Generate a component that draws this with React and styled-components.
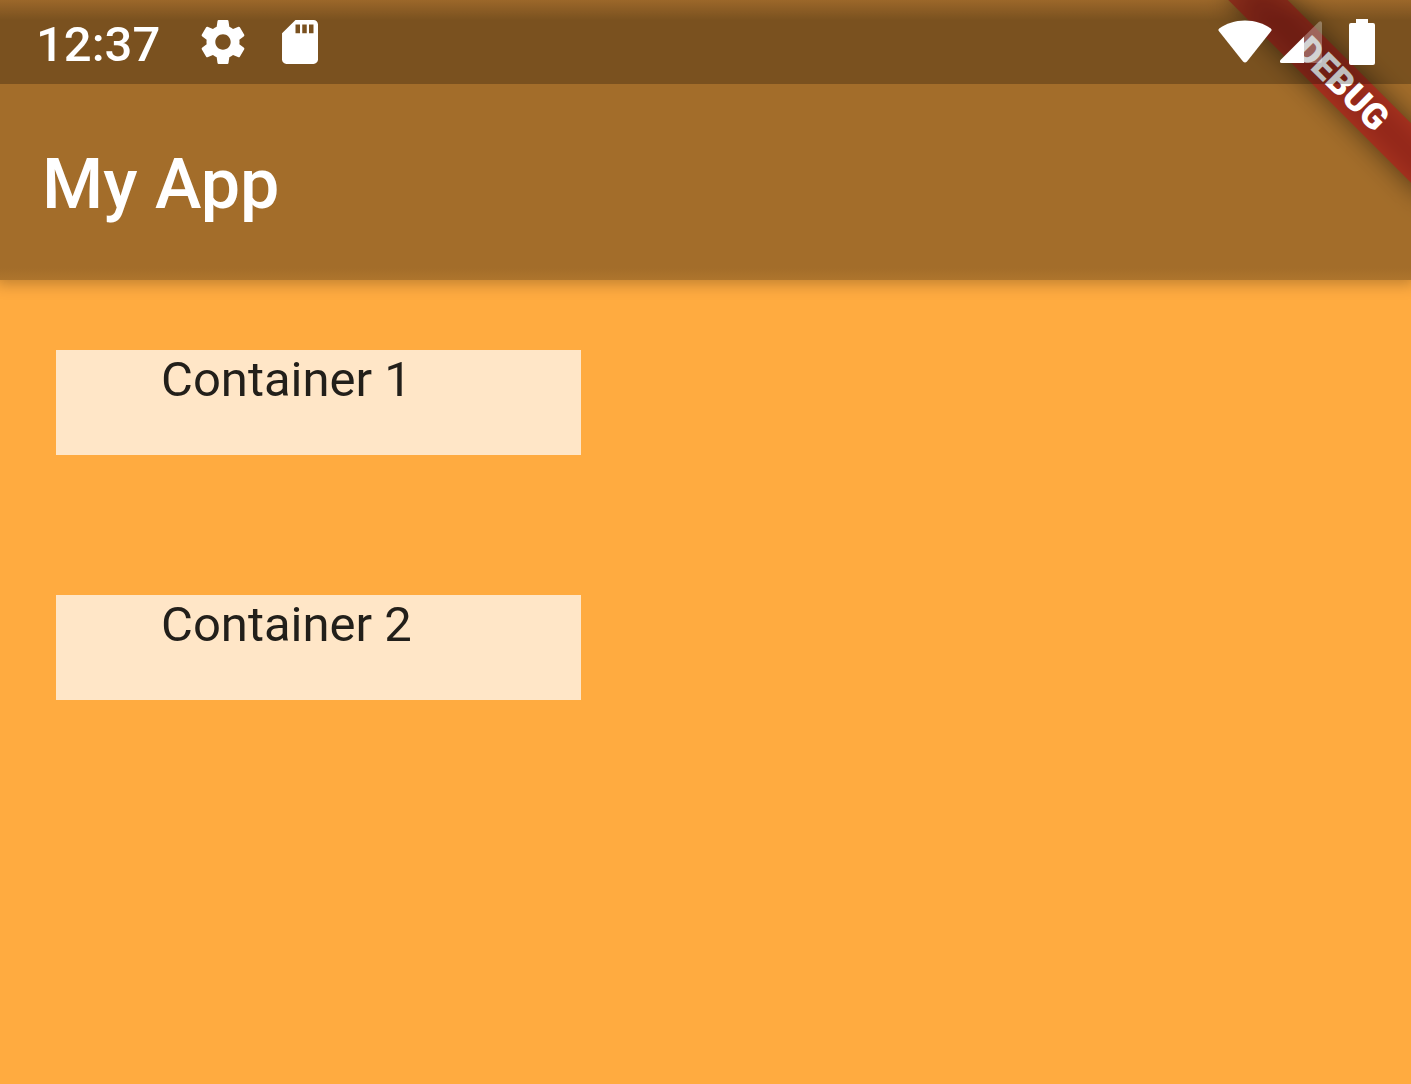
import React from "react";
import styled, { createGlobalStyle } from "styled-components";

const GlobalStyle = createGlobalStyle`
    *, *::before, *::after {
        box-sizing: border-box;
    }
    body {
        margin: 0;
        background: #ffab40;
        color: #221f1a;
        font-family: Roboto, "Noto Sans", sans-serif;
    }
`;

const Screen = styled.div`
    position: relative;
    min-height: 100vh;
    overflow: hidden;
`;

const AppBar = styled.header`
    background: linear-gradient(to bottom, #d08a38 0, #a36d2a 20px, #a36d2a calc(100% - 12px), #ae752d 100%);
    box-shadow: 0 0 14px 4px rgba(0, 0, 0, 0.25);
`;

const StatusBar = styled.div`
    position: relative;
    z-index: 2;
    display: flex;
    align-items: center;
    justify-content: space-between;
    height: 84px;
    padding: 0 36px;
    background: rgba(0, 0, 0, 0.25);
    color: #fff;
`;

const StatusGroup = styled.div`
    display: flex;
    align-items: center;
    gap: ${({ $gap }) => $gap}px;
`;

const Clock = styled.time`
    padding: 6px 4px 0 0;
    font-size: 49px;
    font-weight: 500;
    line-height: 56px;
`;

const Icon = styled.svg`
    display: block;
    fill: #fff;
`;

const Title = styled.h1`
    margin: 0;
    padding: 58px 42px 54px;
    color: #fff;
    font-size: 70px;
    font-weight: 500;
    line-height: 84px;
`;

const Banner = styled.div`
    position: absolute;
    top: 63px;
    right: -71px;
    z-index: 1;
    width: 280px;
    height: 42px;
    transform: rotate(45deg);

    &::before {
        content: "";
        position: absolute;
        inset: 0;
        background: rgba(0, 0, 0, 0.5);
        filter: blur(14px);
    }
`;

const BannerLabel = styled.span`
    position: relative;
    display: block;
    background: rgba(183, 28, 28, 0.63);
    color: #fff;
    font-size: 36px;
    font-weight: 900;
    line-height: 42px;
    text-align: center;
`;

const Content = styled.main`
    display: flex;
    flex-direction: column;
    align-items: flex-start;
    gap: 140px;
    padding: 70px 56px;
`;

const Box = styled.section`
    width: 525px;
    max-width: 100%;
    height: 105px;
    padding-left: 105px;
    background: #ffe6c7;
    font-size: 49px;
    line-height: 60px;
`;

const containers = ["Container 1", "Container 2"];

const GearIcon = () => (
    <Icon width="44" height="44" viewBox="2 2 20 20" aria-hidden="true">
        <path d="M19.43 12.98c.04-.32.07-.64.07-.98s-.03-.66-.07-.98l2.11-1.65c.19-.15.24-.42.12-.64l-2-3.46c-.12-.22-.39-.3-.61-.22l-2.49 1c-.52-.4-1.08-.73-1.69-.98l-.38-2.65C14.46 2.18 14.25 2 14 2h-4c-.25 0-.46.18-.49.42l-.38 2.65c-.61.25-1.17.59-1.69.98l-2.49-1c-.23-.09-.49 0-.61.22l-2 3.46c-.13.22-.07.49.12.64l2.11 1.65c-.04.32-.07.65-.07.98s.03.66.07.98l-2.11 1.65c-.19.15-.24.42-.12.64l2 3.46c.12.22.39.3.61.22l2.49-1c.52.4 1.08.73 1.69.98l.38 2.65c.03.24.24.42.49.42h4c.25 0 .46-.18.49-.42l.38-2.65c.61-.25 1.17-.59 1.69-.98l2.49 1c.23.09.49 0 .61-.22l2-3.46c.12-.22.07-.49-.12-.64l-2.11-1.65zM12 15.5c-1.93 0-3.5-1.57-3.5-3.5s1.57-3.5 3.5-3.5 3.5 1.57 3.5 3.5-1.57 3.5-3.5 3.5z" />
    </Icon>
);

const SdCardIcon = () => (
    <Icon width="36" height="44" viewBox="4 2 16 20" preserveAspectRatio="none" aria-hidden="true">
        <path d="M18 2h-8L4.02 8 4 20c0 1.1.9 2 2 2h12c1.100 0 2-.9 2-2V4c0-1.100-.9-2-2-2zm-6 6h-2V4h2v4zm3 0h-2V4h2v4zm3 0h-2V4h2v4z" />
    </Icon>
);

const WifiIcon = () => (
    <Icon width="54" height="44" viewBox="0 0 54 44" aria-hidden="true">
        <path d="M1.2 8.5C8 3.6 17 .5 27 .5S46 3.6 52.8 8.5Q54.2 9.700 53.2 11L29 41.5Q27 43.5 25 41.5L.8 11Q-.2 9.7 1.2 8.5z" />
    </Icon>
);

const SignalIcon = () => (
    <Icon width="42" height="42" viewBox="0 0 42 42" aria-hidden="true">
        <path d="M24 15.5V42H1.5Q-1 41.5 .5 39z" />
        <path fillOpacity="0.3" d="M24 15.5 39 .7Q41.5-.8 42 2V40Q42 42 40 42H24z" />
    </Icon>
);

const BatteryIcon = () => (
    <Icon width="26" height="46" viewBox="0 0 26 46" aria-hidden="true">
        <path d="M7 0h12v4h5q2 0 2 2v38q0 2-2 2H2q-2 0-2-2V6q0-2 2-2h5z" />
    </Icon>
);

const App = () => {
    return (
        <>
            <GlobalStyle />
            <Screen>
                <AppBar>
                    <StatusBar>
                        <StatusGroup $gap={37}>
                            <Clock>12:37</Clock>
                            <GearIcon />
                            <SdCardIcon />
                        </StatusGroup>
                        <StatusGroup $gap={8}>
                            <WifiIcon />
                            <StatusGroup $gap={27}>
                                <SignalIcon />
                                <BatteryIcon />
                            </StatusGroup>
                        </StatusGroup>
                    </StatusBar>
                    <Title>My App</Title>
                </AppBar>
                <Banner>
                    <BannerLabel>DEBUG</BannerLabel>
                </Banner>
                <Content>
                    {containers.map((name) => {
                        return <Box key={name}>{name}</Box>;
                    })}
                </Content>
            </Screen>
        </>
    );
};

export default App;
